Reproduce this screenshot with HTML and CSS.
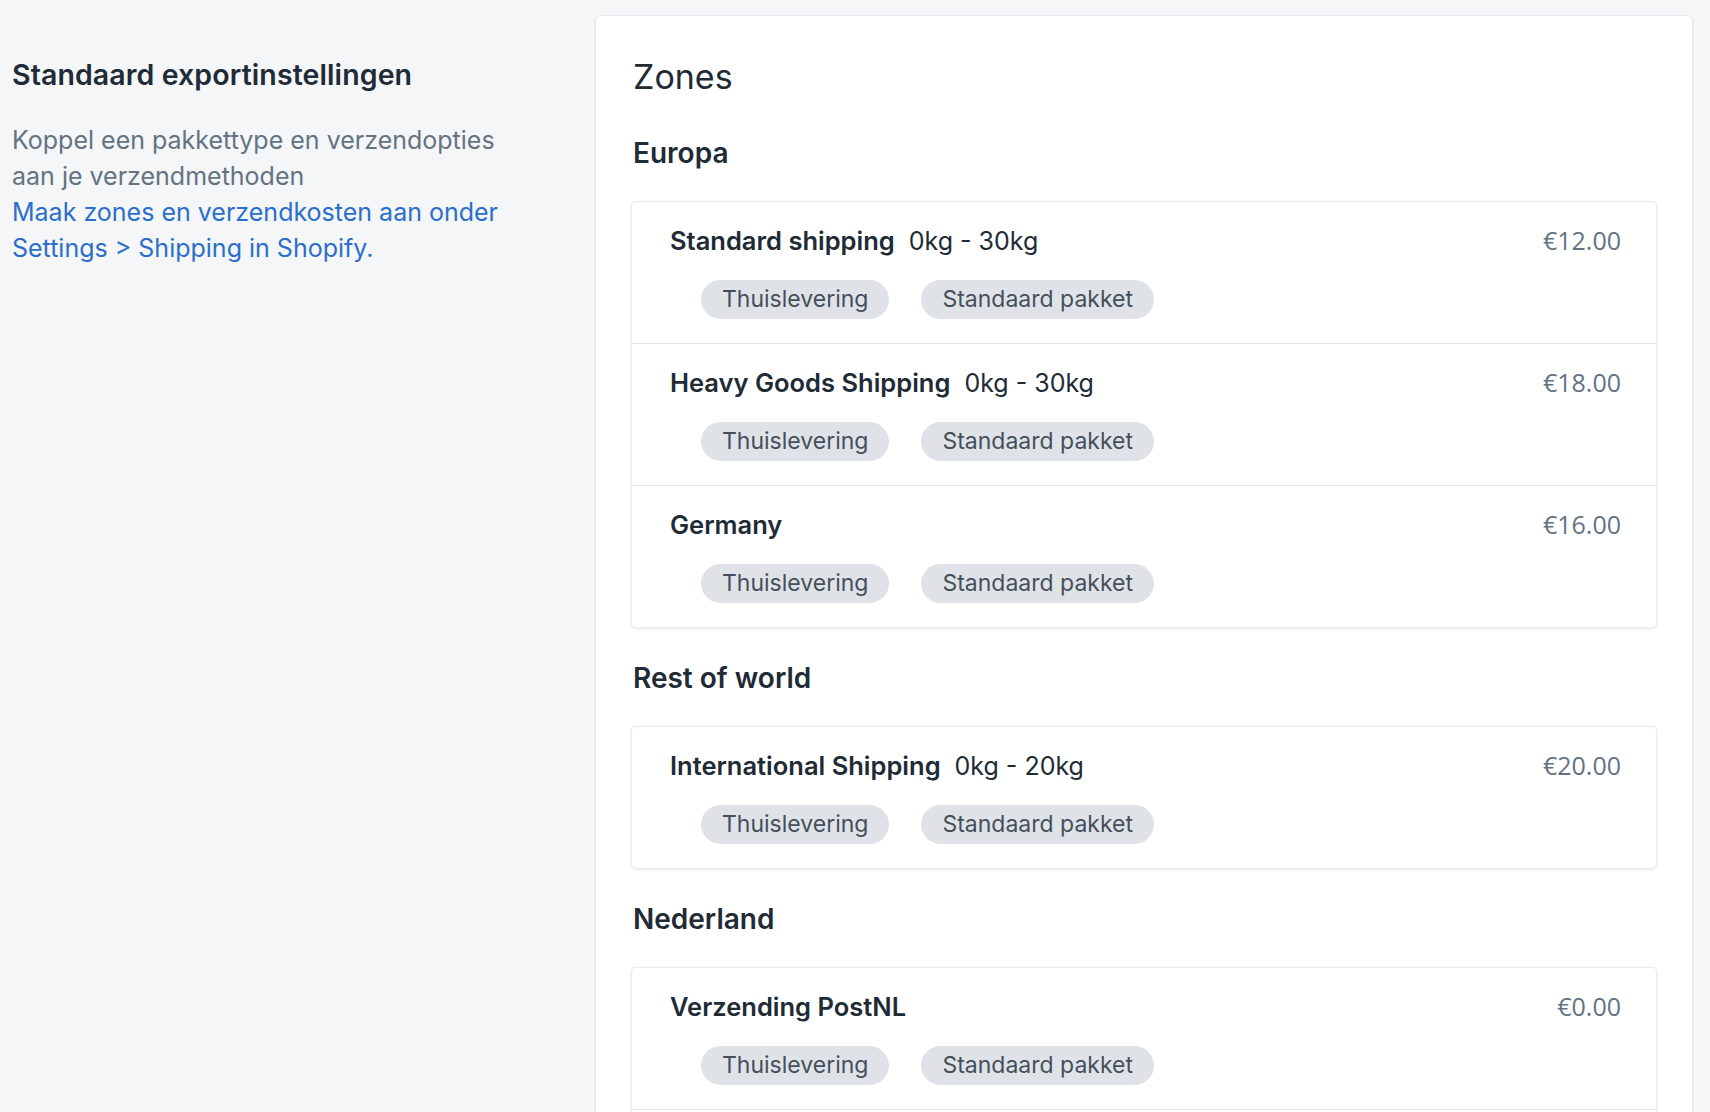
FILE: index.html
```html
<!DOCTYPE html>
<html lang="nl">
<head>
<meta charset="utf-8">
<title>Standaard exportinstellingen</title>
<link rel="stylesheet" href="styles.css">
</head>
<body>
<div class="page">
  <aside class="intro">
    <h2 class="intro-title">Standaard exportinstellingen</h2>
    <p class="intro-text">Koppel een pakkettype en verzendopties aan je verzendmethoden<br><a class="intro-link" href="#">Maak zones en verzendkosten aan onder Settings &gt; Shipping in Shopify.</a></p>
  </aside>
  <main class="card">
    <h1 class="card-title">Zones</h1>

    <h3 class="zone-title">Europa</h3>
    <div class="list">
      <div class="row">
        <div class="row-head">
          <div class="row-name"><strong>Standard shipping</strong><span>0kg - 30kg</span></div>
          <div class="price">€12.00</div>
        </div>
        <div class="tags"><span class="tag">Thuislevering</span><span class="tag">Standaard pakket</span></div>
      </div>
      <div class="row">
        <div class="row-head">
          <div class="row-name"><strong>Heavy Goods Shipping</strong><span>0kg - 30kg</span></div>
          <div class="price">€18.00</div>
        </div>
        <div class="tags"><span class="tag">Thuislevering</span><span class="tag">Standaard pakket</span></div>
      </div>
      <div class="row">
        <div class="row-head">
          <div class="row-name"><strong>Germany</strong></div>
          <div class="price">€16.00</div>
        </div>
        <div class="tags"><span class="tag">Thuislevering</span><span class="tag">Standaard pakket</span></div>
      </div>
    </div>

    <h3 class="zone-title">Rest of world</h3>
    <div class="list">
      <div class="row">
        <div class="row-head">
          <div class="row-name"><strong>International Shipping</strong><span>0kg - 20kg</span></div>
          <div class="price">€20.00</div>
        </div>
        <div class="tags"><span class="tag">Thuislevering</span><span class="tag">Standaard pakket</span></div>
      </div>
    </div>

    <h3 class="zone-title">Nederland</h3>
    <div class="list">
      <div class="row">
        <div class="row-head">
          <div class="row-name"><strong>Verzending PostNL</strong></div>
          <div class="price">€0.00</div>
        </div>
        <div class="tags"><span class="tag">Thuislevering</span><span class="tag">Standaard pakket</span></div>
      </div>
      <div class="row row-more"></div>
    </div>
  </main>
</div>
</body>
</html>
```

FILE: styles.css
```css
* { box-sizing: border-box; }

html, body {
  margin: 0;
  padding: 0;
  background: #f4f6f8;
  height: 1112px;
  overflow: hidden;
}

body {
  font-family: Inter, "Noto Sans", "Liberation Sans", sans-serif;
  color: #212b36;
  -webkit-font-smoothing: antialiased;
}

.page {
  display: flex;
  align-items: flex-start;
  padding: 15px 17px 0 12px;
}

.intro {
  width: 583px;
  flex: 0 0 583px;
  padding-top: 43px;
}

.intro-title {
  margin: 0 0 30px;
  font-size: 28.5px;
  line-height: 34px;
  font-weight: 600;
  letter-spacing: 0.1px;
  color: #212b36;
}

.intro-text {
  margin: 0;
  font-size: 25px;
  line-height: 36px;
  color: #637381;
  width: 500px;
}

.intro-link {
  color: #2c6ecb;
  text-decoration: none;
}

.card {
  flex: 1;
  background: #fff;
  border-radius: 6px;
  border: 1px solid #e6e8eb;
  box-shadow: 0 1px 2px rgba(63, 63, 68, 0.08);
  padding: 41px 35px 40px;
  min-height: 1200px;
}

.card-title {
  margin: 0;
  padding-left: 2px;
  font-size: 34px;
  line-height: 40px;
  font-weight: 400;
  color: #212b36;
}

.zone-title {
  margin: 38px 0 30px;
  padding-left: 2px;
  font-size: 28px;
  line-height: 36px;
  font-weight: 600;
  color: #212b36;
}

.list + .zone-title {
  margin-top: 32px;
}

.list {
  background: #fff;
  border: 1px solid #eaecef;
  border-radius: 5px;
  box-shadow: 0 1px 3px rgba(63, 63, 68, 0.12);
}

.row {
  padding: 22px 35px 24px 38px;
}

.row + .row {
  border-top: 1px solid #dfe3e8;
}

.row-more {
  height: 142px;
}

.row-head {
  display: flex;
  justify-content: space-between;
  align-items: baseline;
  height: 32px;
}

.row-name {
  display: flex;
  align-items: baseline;
  gap: 14px;
  font-size: 25px;
  line-height: 32px;
  color: #212b36;
}

.row-name strong {
  font-size: 25.5px;
  font-weight: 600;
}

.price {
  font-family: "Open Sans", "Noto Sans", sans-serif;
  font-size: 25px;
  line-height: 32px;
  color: #637381;
}

.tags {
  display: flex;
  gap: 32px;
  margin: 24px 0 0 31px;
}

.tag {
  display: inline-block;
  height: 39px;
  line-height: 39px;
  padding: 0 21px;
  border-radius: 20px;
  background: #dfe3e8;
  color: #454f5b;
  font-size: 23px;
}
```
